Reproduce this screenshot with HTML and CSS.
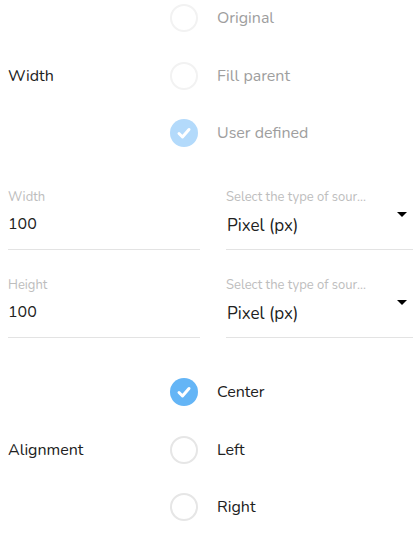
FILE: index.html
```html
<!DOCTYPE html>
<html>
<head>
<meta charset="utf-8">
<link rel="stylesheet" href="styles.css">
</head>
<body>
<div class="page">
  <div class="group">
    <div class="group-label">Width</div>
    <div class="options">
      <div class="option disabled"><span class="radio"></span><span class="opt-text">Original</span></div>
      <div class="option disabled"><span class="radio"></span><span class="opt-text">Fill parent</span></div>
      <div class="option disabled"><span class="radio checked"><svg viewBox="0 0 28 28" width="28" height="28"><path d="M9 14.5 L12.5 18 L19 10.5" fill="none" stroke="#fff" stroke-width="3" stroke-linecap="round" stroke-linejoin="round"/></svg></span><span class="opt-text">User defined</span></div>
    </div>
  </div>

  <div class="fields">
    <div class="field-row">
      <div class="field left">
        <div class="field-label">Width</div>
        <div class="field-value">100</div>
      </div>
      <div class="field right">
        <div class="field-label">Select the type of sour...</div>
        <div class="field-value select">Pixel (px)<span class="arrow"></span></div>
      </div>
    </div>
    <div class="field-row">
      <div class="field left">
        <div class="field-label">Height</div>
        <div class="field-value">100</div>
      </div>
      <div class="field right">
        <div class="field-label">Select the type of sour...</div>
        <div class="field-value select">Pixel (px)<span class="arrow"></span></div>
      </div>
    </div>
  </div>

  <div class="group second">
    <div class="group-label">Alignment</div>
    <div class="options">
      <div class="option"><span class="radio checked"><svg viewBox="0 0 28 28" width="28" height="28"><path d="M9 14.5 L12.5 18 L19 10.5" fill="none" stroke="#fff" stroke-width="3" stroke-linecap="round" stroke-linejoin="round"/></svg></span><span class="opt-text">Center</span></div>
      <div class="option"><span class="radio"></span><span class="opt-text">Left</span></div>
      <div class="option"><span class="radio"></span><span class="opt-text">Right</span></div>
    </div>
  </div>
</div>
</body>
</html>
```

FILE: styles.css
```css
* { box-sizing: border-box; }
html, body { margin: 0; padding: 0; background: #fff; }
body {
  font-family: "Nunito", "Lato", "Open Sans", sans-serif;
  color: #212121;
  width: 417px;
  height: 535px;
  overflow: hidden;
}
.page {
  padding: 4px 4px 0 8px;
}
.group {
  display: flex;
  align-items: center;
}
.group-label {
  width: 162px;
  font-size: 16px;
  line-height: 20px;
  color: #212121;
}
.options {
  display: flex;
  flex-direction: column;
  gap: 29.5px;
}
.option {
  display: flex;
  align-items: center;
  gap: 19px;
  height: 28px;
}
.radio {
  width: 28px;
  height: 28px;
  border-radius: 50%;
  border: 2px solid #e6e6e6;
  flex: none;
  position: relative;
}
.option.disabled .radio { border-color: #f2f2f2; }
.radio.checked {
  border: none;
  background: #64b5f6;
}
.option.disabled .radio.checked { background: #b3dafb; }
.radio svg { display: block; }
.opt-text {
  font-size: 16px;
  line-height: 20px;
  color: #212121;
}
.option.disabled .opt-text { color: #9e9e9e; }

.fields {
  margin-top: 42px;
  display: flex;
  flex-direction: column;
  gap: 27px;
}
.field-row {
  display: flex;
  gap: 26px;
}
.field {
  border-bottom: 1px solid #e3e3e3;
  padding-bottom: 13px;
}
.field.left { width: 192px; }
.field.right { width: 187px; }
.field-label {
  font-size: 13px;
  line-height: 16px;
  color: #bdbdbd;
  white-space: nowrap;
}
.field-value {
  margin-top: 7px;
  font-size: 16px;
  line-height: 24px;
  color: #212121;
}
.field-value.select {
  position: relative;
  margin-top: 9px;
  margin-bottom: -2px;
  font-size: 17px;
  padding-left: 1px;
}
.arrow {
  position: absolute;
  right: 6px;
  top: -2px;
  width: 0;
  height: 0;
  border-left: 5.5px solid transparent;
  border-right: 5.5px solid transparent;
  border-top: 5.5px solid #000;
}
.group.second { margin-top: 40px; }
```
